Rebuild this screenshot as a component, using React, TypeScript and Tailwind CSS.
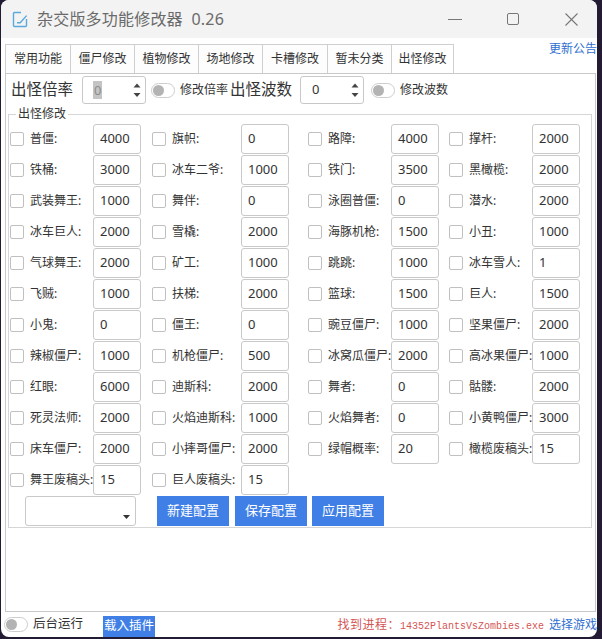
import React from "react";

type Cell = [string, string];

const rows: Cell[][] = [
  [["普僵:", "4000"], ["旗帜:", "0"], ["路障:", "4000"], ["撑杆:", "2000"]],
  [["铁桶:", "3000"], ["冰车二爷:", "1000"], ["铁门:", "3500"], ["黑橄榄:", "2000"]],
  [["武装舞王:", "1000"], ["舞伴:", "0"], ["泳圈普僵:", "0"], ["潜水:", "2000"]],
  [["冰车巨人:", "2000"], ["雪橇:", "2000"], ["海豚机枪:", "1500"], ["小丑:", "1000"]],
  [["气球舞王:", "2000"], ["矿工:", "1000"], ["跳跳:", "1000"], ["冰车雪人:", "1"]],
  [["飞贼:", "1000"], ["扶梯:", "2000"], ["篮球:", "1500"], ["巨人:", "1500"]],
  [["小鬼:", "0"], ["僵王:", "0"], ["豌豆僵尸:", "1000"], ["坚果僵尸:", "2000"]],
  [["辣椒僵尸:", "1000"], ["机枪僵尸:", "500"], ["冰窝瓜僵尸:", "2000"], ["高冰果僵尸:", "1000"]],
  [["红眼:", "6000"], ["迪斯科:", "2000"], ["舞者:", "0"], ["骷髅:", "2000"]],
  [["死灵法师:", "2000"], ["火焰迪斯科:", "1000"], ["火焰舞者:", "0"], ["小黄鸭僵尸:", "3000"]],
  [["床车僵尸:", "2000"], ["小摔哥僵尸:", "2000"], ["绿帽概率:", "20"], ["橄榄废稿头:", "15"]],
  [["舞王废稿头:", "15"], ["巨人废稿头:", "15"]],
];

const colW = ["w-[142px]", "w-[156px]", "w-[141px]", "w-[140px]"];
const labelW = ["w-[63px]", "w-[69px]", "w-[63px]", "w-[63px]"];

const tabs = ["常用功能", "僵尸修改", "植物修改", "场地修改", "卡槽修改", "暂未分类", "出怪修改"];
const tabW = ["w-[65px]", "w-[64px]", "w-[64px]", "w-[64px]", "w-[65px]", "w-[64px]", "w-[63px]"];

function CheckBox() {
  return <span className="w-[14px] h-[14px] shrink-0 border border-[#c0c0c0] rounded-[2px] bg-white" />;
}

function Toggle() {
  return (
    <span className="w-[24px] h-[15px] shrink-0 rounded-full border border-[#cdcdcd] bg-white flex items-center pl-[1px]">
      <span className="w-[11px] h-[11px] rounded-full bg-[#b3b3b3]" />
    </span>
  );
}

function SpinBox({ selected }: { selected?: boolean }) {
  return (
    <div className="w-[64px] h-[28px] border border-[#c8c8c8] rounded-[3px] bg-white flex items-center pl-[10px] pr-[4px] text-[13px]">
      {selected ? (
        <span className="bg-[#c4c4c4] text-[#8c8c8c] px-[1px] leading-[18px]">0</span>
      ) : (
        <span className="text-[#333] px-[1px]">0</span>
      )}
      <svg className="ml-auto" width="8" height="15" viewBox="0 0 8 15">
        <path d="M0.5 4.5 L4 0.5 L7.5 4.5Z" fill="#444" />
        <path d="M0.5 10 L4 14 L7.5 10Z" fill="#444" />
      </svg>
    </div>
  );
}

export default function App() {
  return (
    <div className="w-[602px] h-[639px] bg-[#221b33] pl-[1px] font-['Noto_Sans','Noto_Sans_CJK_SC',sans-serif] text-[#333]">
      <div className="w-[596px] h-[637px] bg-white rounded-[8px] overflow-hidden flex flex-col">
        {/* title bar */}
        <div className="h-[38px] bg-[#f3f3f3] flex items-center shrink-0">
          <svg className="ml-[11px]" width="16" height="17" viewBox="0 0 16 17" fill="none" stroke="#59a9de" strokeWidth="1.4">
            <path d="M9 1.5H2.5a1 1 0 0 0-1 1v12a1 1 0 0 0 1 1h11a1 1 0 0 0 1-1V8" />
            <path d="M5 11.8h3.2L14.6 4.6" />
          </svg>
          <span className="ml-[9px] text-[16px] text-[#6a6a6a] tracking-[0.2px]">杂交版多功能修改器&nbsp;&nbsp;0.26</span>
          <div className="ml-auto flex items-center">
            <span className="w-[58px] flex justify-center">
              <span className="w-[14px] h-[1px] bg-[#777]" />
            </span>
            <span className="w-[58px] flex justify-center">
              <span className="w-[12px] h-[12px] border border-[#777] rounded-[2px]" />
            </span>
            <span className="w-[58px] flex justify-center mr-[-3px]">
              <svg width="13" height="13" viewBox="0 0 13 13" stroke="#777" strokeWidth="1.1">
                <path d="M0.5 0.5L12.5 12.5M12.5 0.5L0.5 12.5" />
              </svg>
            </span>
          </div>
        </div>

        {/* tabs */}
        <div className="flex items-start shrink-0">
          <div className="flex ml-[4px] mt-[6px]">
            {tabs.map((t, i) => (
              <div
                key={t}
                className={`${tabW[i]} h-[29px] border-t border-l border-[#cfcfcf] flex items-center justify-center text-[12px] ${
                  i === tabs.length - 1 ? "border-r bg-white" : "bg-[#fdfdfd]"
                }`}
              >
                {t}
              </div>
            ))}
          </div>
          <span className="ml-auto mt-[3px] text-[12px] leading-[16px] text-[#2f6fd0] whitespace-nowrap">更新公告</span>
        </div>

        {/* panel */}
        <div className="ml-[4px] w-[591px] h-[539px] border border-[#c9c9c9] bg-white pt-[2px] shrink-0">
          <div className="flex items-center h-[28px]">
            <span className="ml-[5px] text-[15.5px] w-[62px] whitespace-nowrap">出怪倍率</span>
            <span className="ml-[9px]">
              <SpinBox selected />
            </span>
            <span className="ml-[5px]">
              <Toggle />
            </span>
            <span className="ml-[5px] text-[12px] w-[48px] whitespace-nowrap">修改倍率</span>
            <span className="ml-[2px] text-[15.5px] w-[62px] whitespace-nowrap">出怪波数</span>
            <span className="ml-[8px]">
              <SpinBox />
            </span>
            <span className="ml-[7px]">
              <Toggle />
            </span>
            <span className="ml-[5px] text-[12px] whitespace-nowrap">修改波数</span>
          </div>

          <fieldset className="ml-[2px] mt-[3px] w-[584px] h-[421px] border border-[#d6d6d6] pl-[1px]">
            <legend className="ml-[6px] px-[2px] text-[12px] leading-[14px]">出怪修改</legend>
            <div className="flex flex-col gap-y-[1px] pt-[3px]">
              {rows.map((row, ri) => (
                <div key={ri} className="flex h-[30px]">
                  {row.map(([label, value], ci) => (
                    <div key={ci} className={`flex items-center ${colW[ci]}`}>
                      <CheckBox />
                      <span className={`ml-[6px] ${labelW[ci]} text-[12px] whitespace-nowrap`}>{label}</span>
                      <div className="w-[48px] h-[30px] shrink-0 border border-[#c9c9c9] rounded-[3px] bg-white flex items-center pl-[6px] text-[13px]">
                        {value}
                      </div>
                    </div>
                  ))}
                </div>
              ))}
              <div className="flex items-center h-[30px]">
                <div className="ml-[15px] w-[111px] h-[30px] border border-[#c9c9c9] rounded-[3px] bg-white flex items-end justify-end pr-[5px] pb-[6px]">
                  <svg width="7" height="4" viewBox="0 0 7 4">
                    <path d="M0 0H7L3.5 4Z" fill="#333" />
                  </svg>
                </div>
                <button className="ml-[21px] w-[72px] h-[30px] bg-[#3f7fe6] text-white text-[13px]">新建配置</button>
                <button className="ml-[6px] w-[72px] h-[30px] bg-[#3f7fe6] text-white text-[13px]">保存配置</button>
                <button className="ml-[5px] w-[72px] h-[30px] bg-[#3f7fe6] text-white text-[13px]">应用配置</button>
              </div>
            </div>
          </fieldset>
        </div>

        {/* status bar */}
        <div className="flex items-center h-[25px] shrink-0">
          <span className="ml-[3px]">
            <Toggle />
          </span>
          <span className="ml-[5px] text-[12.5px]">后台运行</span>
          <span className="ml-[20px] self-end h-[21px] px-[1px] bg-[#3f7fe6] text-white text-[12.5px] flex items-center">载入插件</span>
          <span className="ml-auto text-[#d45555] whitespace-nowrap flex items-baseline">
            <span className="text-[12px] tracking-[0.5px]">找到进程：</span>
            <span className="font-['Liberation_Mono',monospace] text-[10px]">14352PlantsVsZombies.exe</span>
          </span>
          <span className="ml-[5px] text-[12px] text-[#2f6fd0] whitespace-nowrap">选择游戏</span>
        </div>
      </div>
    </div>
  );
}
